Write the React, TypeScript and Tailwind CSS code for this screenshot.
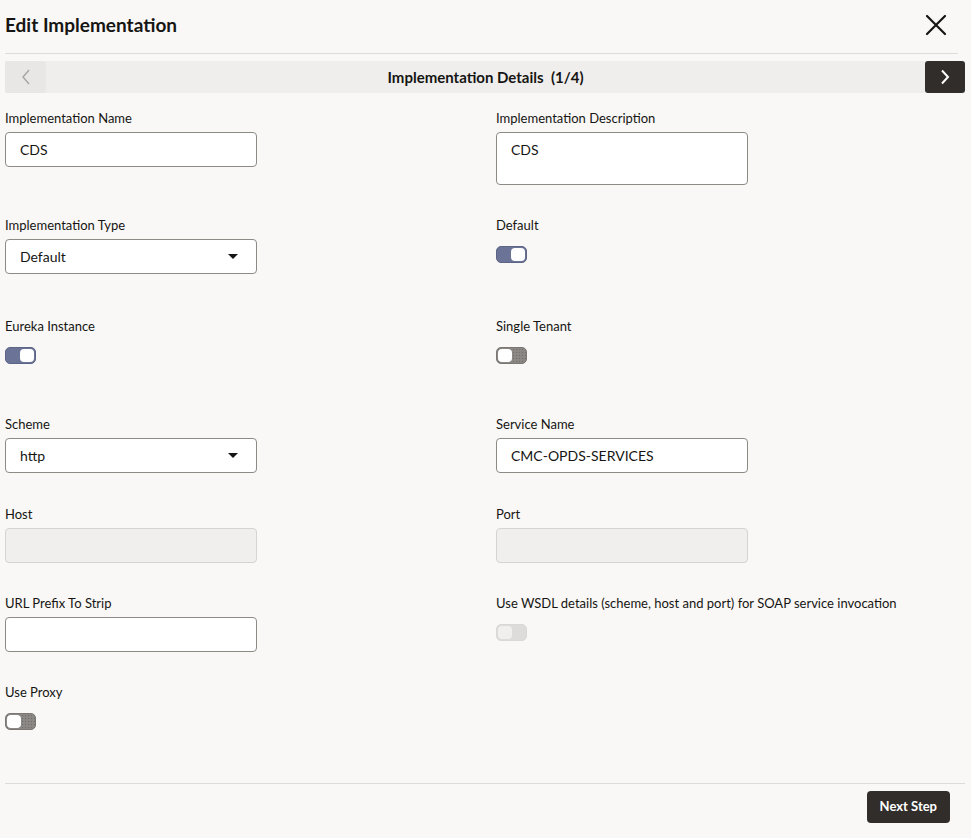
import React from "react";

const Label = ({ children }: { children: React.ReactNode }) => (
  <div className="text-[13px] leading-[16px] text-[#161513] mb-[6px]">{children}</div>
);

const TextInput = ({ value, disabled, tall }: { value?: string; disabled?: boolean; tall?: boolean }) => (
  <div
    className={
      "w-[252px] rounded-[4px] border pl-[14px] text-[14px] text-[#161513] " +
      (tall ? "h-[53px] pt-[7px] leading-[20px] " : "h-[35px] flex items-center ") +
      (disabled ? "bg-[#f0efed] border-[#d6d4d1]" : "bg-white border-[#8e8b87]")
    }
  >
    {value}
  </div>
);

const Select = ({ value }: { value: string }) => (
  <div className="w-[252px] h-[35px] rounded-[4px] border border-[#8e8b87] bg-white flex items-center justify-between pl-[14px] pr-[18px] text-[14px] text-[#161513]">
    <span>{value}</span>
    <svg width="10" height="6" viewBox="0 0 10 6">
      <path d="M0 0 L10 0 L5 5 Z" fill="#161513" />
    </svg>
  </div>
);

const Toggle = ({ state }: { state: "on" | "off" | "disabled" }) => {
  if (state === "on")
    return (
      <div className="w-[31px] h-[17px] rounded-[5px] bg-[#6b7396] border border-[#5d6587] flex items-center justify-end pr-[1px]">
        <div className="w-[14px] h-[13px] rounded-[4px] bg-white" />
      </div>
    );
  if (state === "off")
    return (
      <div
        className="w-[31px] h-[17px] rounded-[5px] bg-[#8a8784] border border-[#7b7874] flex items-center pl-[1px]"
        style={{ backgroundImage: "radial-gradient(#6f6c69 0.6px, transparent 0.7px)", backgroundSize: "3px 3px" }}
      >
        <div className="w-[14px] h-[13px] rounded-[4px] bg-white" />
      </div>
    );
  return (
    <div className="w-[31px] h-[17px] rounded-[5px] bg-[#dddcda] border border-[#d9d8d6] flex items-center pl-[1px]">
      <div className="w-[14px] h-[13px] rounded-[4px] bg-[#f0efed]" />
    </div>
  );
};

export default function App() {
  return (
    <div className="w-[971px] h-[838px] bg-[#f9f8f6] flex flex-col" style={{ fontFamily: "Lato, 'Noto Sans', sans-serif" }}>
      {/* Header */}
      <div className="h-[54px] ml-[5px] mr-[13px] border-b border-[#dedcd9] flex items-center justify-between shrink-0">
        <div className="text-[19px] font-bold text-[#161513] -mt-[3px]">Edit Implementation</div>
        <svg width="22" height="22" viewBox="0 0 22 22" className="mr-[11px] -mt-[3px]">
          <path d="M2 2 L20 20 M20 2 L2 20" stroke="#161513" strokeWidth="2.2" strokeLinecap="round" />
        </svg>
      </div>

      {/* Nav bar */}
      <div className="mt-[7px] ml-[5px] mr-[6px] h-[32px] flex items-center bg-[#efeeec] shrink-0">
        <div className="w-[41px] h-full bg-[#e8e7e5] rounded-[3px] flex items-center justify-center">
          <svg width="10" height="16" viewBox="0 0 10 16">
            <path d="M8 1 L2 8 L8 15" stroke="#a5a29f" strokeWidth="1.3" fill="none" />
          </svg>
        </div>
        <div className="flex-1 text-center text-[15px] font-bold text-[#161513]">
          Implementation Details&nbsp;&nbsp;(1/4)
        </div>
        <div className="w-[40px] h-full bg-[#312d2a] rounded-[3px] flex items-center justify-center">
          <svg width="12" height="16" viewBox="0 0 12 16">
            <path d="M3 1.5 L9 8 L3 14.5" stroke="#ffffff" strokeWidth="2" fill="none" />
          </svg>
        </div>
      </div>

      {/* Fields */}
      <div className="mt-[17px] pl-[5px] grid grid-cols-[491px_1fr] content-start">
        <div className="h-[107px]">
          <Label>Implementation Name</Label>
          <TextInput value="CDS" />
        </div>
        <div className="h-[107px]">
          <Label>Implementation Description</Label>
          <TextInput value="CDS" tall />
        </div>

        <div className="h-[101px]">
          <Label>Implementation Type</Label>
          <Select value="Default" />
        </div>
        <div className="h-[101px]">
          <div className="mb-[13px]"><Label>Default</Label></div>
          <Toggle state="on" />
        </div>

        <div className="h-[98px]">
          <div className="mb-[13px]"><Label>Eureka Instance</Label></div>
          <Toggle state="on" />
        </div>
        <div className="h-[98px]">
          <div className="mb-[13px]"><Label>Single Tenant</Label></div>
          <Toggle state="off" />
        </div>

        <div className="h-[90px]">
          <Label>Scheme</Label>
          <Select value="http" />
        </div>
        <div className="h-[90px]">
          <Label>Service Name</Label>
          <TextInput value="CMC-OPDS-SERVICES" />
        </div>

        <div className="h-[89px]">
          <Label>Host</Label>
          <TextInput disabled />
        </div>
        <div className="h-[89px]">
          <Label>Port</Label>
          <TextInput disabled />
        </div>

        <div className="h-[89px]">
          <Label>URL Prefix To Strip</Label>
          <TextInput />
        </div>
        <div className="h-[89px]">
          <div className="mb-[13px]"><Label>Use WSDL details (scheme, host and port) for SOAP service invocation</Label></div>
          <Toggle state="disabled" />
        </div>

        <div>
          <div className="mb-[13px]"><Label>Use Proxy</Label></div>
          <Toggle state="off" />
        </div>
        <div />
      </div>
      <div className="flex-1" />

      {/* Footer */}
      <div className="ml-[5px] mr-[6px] border-t border-[#dedcd9] h-[55px] pt-[7px] flex justify-end shrink-0">
        <button className="mr-[15px] h-[32px] px-[13px] rounded-[4px] bg-[#312d2a] text-white text-[13px] font-bold">
          Next Step
        </button>
      </div>
    </div>
  );
}
